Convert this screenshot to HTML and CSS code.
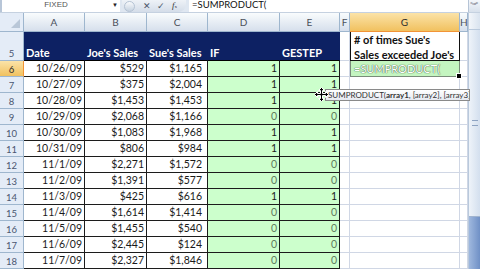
FILE: index.html
```html
<!DOCTYPE html>
<html lang="en">

<head>
    <meta charset="UTF-8">
    <meta name="viewport" content="width=device-width, initial-scale=1.0">
    <title>SUMPRODUCT - Sue vs Joe</title>
    <link rel="stylesheet" href="styles.css">
</head>

<body>
    <div class="app">
        <!-- Formula bar -->
        <div class="formula-bar">
            <div class="name-box">FIXED</div>
            <div class="name-drop">&#9660;</div>
            <div class="fx-buttons">
                <span class="knob"></span>
                <span class="fx-btn">&#10005;</span>
                <span class="fx-btn">&#10003;</span>
                <span class="fx-btn fx"><i>f</i><sub>x</sub></span>
            </div>
            <div class="formula">=SUMPRODUCT(</div>
            <div class="expand">&#65086;</div>
        </div>

        <!-- Sheet -->
        <div class="sheet-area">
            <div class="sheet">
                <div class="row col-heads">
                    <div class="corner"></div>
                    <div class="ch">A</div>
                    <div class="ch">B</div>
                    <div class="ch">C</div>
                    <div class="ch">D</div>
                    <div class="ch">E</div>
                    <div class="ch">F</div>
                    <div class="ch active">G</div>
                    <div class="ch">H</div>
                </div>

                <div class="row head-row">
                    <div class="rh">5</div>
                    <div class="c hdr">Date</div>
                    <div class="c hdr">Joe's Sales</div>
                    <div class="c hdr">Sue's Sales</div>
                    <div class="c hdr">IF</div>
                    <div class="c hdr">GESTEP</div>
                    <div class="c blank"></div>
                    <div class="c note">
                        <div class="note-text"># of times Sue's Sales exceeded Joe's</div>
                    </div>
                    <div class="c blank"></div>
                </div>

                <div class="row">
                    <div class="rh active">6</div>
                    <div class="c num">10/26/09</div>
                    <div class="c num">$529</div>
                    <div class="c num">$1,165</div>
                    <div class="c num grn">1</div>
                    <div class="c num grn">1</div>
                    <div class="c blank"></div>
                    <div class="c editing">=SUMPRODUCT(<span class="handle"></span></div>
                    <div class="c blank"></div>
                </div>

                <div class="row">
                    <div class="rh">7</div>
                    <div class="c num">10/27/09</div>
                    <div class="c num">$375</div>
                    <div class="c num">$2,004</div>
                    <div class="c num grn">1</div>
                    <div class="c num grn">1</div>
                    <div class="c blank"></div>
                    <div class="c blank"></div>
                    <div class="c blank"></div>
                </div>

                <div class="row">
                    <div class="rh">8</div>
                    <div class="c num">10/28/09</div>
                    <div class="c num">$1,453</div>
                    <div class="c num">$1,453</div>
                    <div class="c num grn">1</div>
                    <div class="c num grn">1</div>
                    <div class="c blank"></div>
                    <div class="c blank"></div>
                    <div class="c blank"></div>
                </div>

                <div class="row">
                    <div class="rh">9</div>
                    <div class="c num">10/29/09</div>
                    <div class="c num">$2,068</div>
                    <div class="c num">$1,166</div>
                    <div class="c num grn zero">0</div>
                    <div class="c num grn zero">0</div>
                    <div class="c blank"></div>
                    <div class="c blank"></div>
                    <div class="c blank"></div>
                </div>

                <div class="row">
                    <div class="rh">10</div>
                    <div class="c num">10/30/09</div>
                    <div class="c num">$1,083</div>
                    <div class="c num">$1,968</div>
                    <div class="c num grn">1</div>
                    <div class="c num grn">1</div>
                    <div class="c blank"></div>
                    <div class="c blank"></div>
                    <div class="c blank"></div>
                </div>

                <div class="row">
                    <div class="rh">11</div>
                    <div class="c num">10/31/09</div>
                    <div class="c num">$806</div>
                    <div class="c num">$984</div>
                    <div class="c num grn">1</div>
                    <div class="c num grn">1</div>
                    <div class="c blank"></div>
                    <div class="c blank"></div>
                    <div class="c blank"></div>
                </div>

                <div class="row">
                    <div class="rh">12</div>
                    <div class="c num">11/1/09</div>
                    <div class="c num">$2,271</div>
                    <div class="c num">$1,572</div>
                    <div class="c num grn zero">0</div>
                    <div class="c num grn zero">0</div>
                    <div class="c blank"></div>
                    <div class="c blank"></div>
                    <div class="c blank"></div>
                </div>

                <div class="row">
                    <div class="rh">13</div>
                    <div class="c num">11/2/09</div>
                    <div class="c num">$1,391</div>
                    <div class="c num">$577</div>
                    <div class="c num grn zero">0</div>
                    <div class="c num grn zero">0</div>
                    <div class="c blank"></div>
                    <div class="c blank"></div>
                    <div class="c blank"></div>
                </div>

                <div class="row">
                    <div class="rh">14</div>
                    <div class="c num">11/3/09</div>
                    <div class="c num">$425</div>
                    <div class="c num">$616</div>
                    <div class="c num grn">1</div>
                    <div class="c num grn">1</div>
                    <div class="c blank"></div>
                    <div class="c blank"></div>
                    <div class="c blank"></div>
                </div>

                <div class="row">
                    <div class="rh">15</div>
                    <div class="c num">11/4/09</div>
                    <div class="c num">$1,614</div>
                    <div class="c num">$1,414</div>
                    <div class="c num grn zero">0</div>
                    <div class="c num grn zero">0</div>
                    <div class="c blank"></div>
                    <div class="c blank"></div>
                    <div class="c blank"></div>
                </div>

                <div class="row">
                    <div class="rh">16</div>
                    <div class="c num">11/5/09</div>
                    <div class="c num">$1,455</div>
                    <div class="c num">$540</div>
                    <div class="c num grn zero">0</div>
                    <div class="c num grn zero">0</div>
                    <div class="c blank"></div>
                    <div class="c blank"></div>
                    <div class="c blank"></div>
                </div>

                <div class="row">
                    <div class="rh">17</div>
                    <div class="c num">11/6/09</div>
                    <div class="c num">$2,445</div>
                    <div class="c num">$124</div>
                    <div class="c num grn zero">0</div>
                    <div class="c num grn zero">0</div>
                    <div class="c blank"></div>
                    <div class="c blank"></div>
                    <div class="c blank"></div>
                </div>

                <div class="row">
                    <div class="rh">18</div>
                    <div class="c num">11/7/09</div>
                    <div class="c num">$2,327</div>
                    <div class="c num">$1,846</div>
                    <div class="c num grn zero">0</div>
                    <div class="c num grn zero">0</div>
                    <div class="c blank"></div>
                    <div class="c blank"></div>
                    <div class="c blank"></div>
                </div>
            </div>

            <!-- Vertical scrollbar -->
            <div class="vscroll">
                <div class="vs-up"></div>
                <div class="vs-thumb"><span class="grip"></span></div>
                <div class="vs-track"></div>
            </div>

            <!-- Function tooltip + move cursor -->
            <div class="tooltip">SUMPRODUCT(<b>array1</b>, [array2], [array3], ...)</div>
            <svg class="move-cursor" width="15" height="15" viewBox="0 0 15 15">
                <path d="M7.5 0.5 L10.5 3.5 L8.5 3.5 L8.5 6.5 L11.5 6.5 L11.5 4.5 L14.5 7.5 L11.5 10.5 L11.5 8.5 L8.5 8.5 L8.5 11.5 L10.5 11.5 L7.5 14.5 L4.5 11.5 L6.5 11.5 L6.5 8.5 L3.5 8.5 L3.5 10.5 L0.5 7.5 L3.5 4.5 L3.5 6.5 L6.5 6.5 L6.5 3.5 L4.5 3.5 Z"
                    fill="#000" stroke="#fff" stroke-width="1" />
            </svg>
        </div>
    </div>
</body>

</html>
```

FILE: styles.css
```css
body {
    margin: 0;
    font-family: "Lato", "Open Sans", sans-serif;
    background-color: #fff;
    color: #1a1a1a;
}

.app {
    position: relative;
    width: 480px;
    height: 270px;
    overflow: hidden;
}

/* ---------- formula bar ---------- */

.formula-bar {
    display: flex;
    height: 12px;
    border-bottom: 1px solid #c5d1e0;
    background-color: #dfe7f1;
    font-size: 9px;
    align-items: stretch;
}

.name-box {
    width: 108px;
    background-color: #fff;
    border-left: 2px solid #b8c6d8;
    color: #555;
    text-align: center;
    line-height: 10px;
    font-family: "Liberation Sans", sans-serif;
    font-size: 8px;
}

.name-drop {
    width: 10px;
    background-color: #fff;
    font-size: 6px;
    line-height: 10px;
    color: #222;
    text-align: center;
}

.fx-buttons {
    display: flex;
    align-items: center;
    gap: 3px;
    width: 62px;
    margin: 0 3px 0 2px;
    padding-left: 2px;
    border-radius: 0 0 8px 8px;
    background: linear-gradient(#eef2f7, #d4dde9);
    color: #556;
}

.knob {
    width: 9px;
    height: 9px;
    border-radius: 50%;
    background: linear-gradient(#f8fafc, #c6d2e0);
    border: 1px solid #b5c3d4;
    margin-right: 3px;
}

.fx-btn {
    width: 11px;
    text-align: center;
    font-size: 9px;
    line-height: 10px;
    color: #4a5568;
}

.fx {
    font-family: "Liberation Serif", serif;
    font-size: 9px;
    line-height: 9px;
    color: #333;
}

.fx sub {
    font-size: 5px;
    vertical-align: baseline;
}

.formula {
    flex: 1;
    background-color: #fff;
    padding-left: 3px;
    font-size: 9.5px;
    line-height: 10px;
    color: #111;
}

.expand {
    width: 11px;
    background: linear-gradient(#f4f7fb, #d8e1ec);
    border-left: 1px solid #b6c4d6;
    font-size: 9px;
    line-height: 10px;
    text-align: center;
    color: #445;
}

/* ---------- sheet ---------- */

.sheet-area {
    display: flex;
}

.sheet {
    width: 468px;
}

.row {
    display: grid;
    grid-template-columns: 24px 61px 62px 61px 72px 60px 10px 110px 8px;
    height: 16px;
}

.col-heads {
    height: 19px;
}

.head-row {
    height: 29px;
}

.corner {
    position: relative;
    background-color: #e4ecf7;
    border-right: 1px solid #9eb6ce;
    border-bottom: 1px solid #9eb6ce;
}

.corner::after {
    content: "";
    position: absolute;
    right: 3px;
    bottom: 3px;
    border-left: 9px solid transparent;
    border-bottom: 9px solid #b9c7d8;
}

.ch {
    background: linear-gradient(#f9fcfd, #d6dfec);
    border-right: 1px solid #9eb6ce;
    border-bottom: 1px solid #9eb6ce;
    color: #4a4f5a;
    font-size: 10px;
    line-height: 18px;
    text-align: center;
    overflow: hidden;
}

.ch.active {
    background: linear-gradient(#fbe3a8, #f1c15f);
    border-bottom-color: #f29436;
    color: #2c2c2c;
}

.rh {
    background-color: #e4ecf7;
    border-right: 1px solid #9eb6ce;
    border-bottom: 1px solid #9eb6ce;
    color: #4a5670;
    font-size: 9.5px;
    text-align: center;
    display: flex;
    align-items: flex-end;
    justify-content: center;
    padding-bottom: 1px;
}

.rh.active {
    background: linear-gradient(#fbe3a8, #f1c15f);
    border-right-color: #f29436;
    color: #2c2c2c;
}

.c {
    border-right: 1px solid #1c1c1c;
    border-bottom: 1px solid #1c1c1c;
    font-size: 10.5px;
    line-height: 15px;
    white-space: nowrap;
    overflow: hidden;
    padding: 0 2px;
}

.num {
    text-align: right;
}

.num:nth-child(4) {
    padding-right: 5px;
}

.hdr {
    background-color: #0d2163;
    border-right-color: #0d2163;
    border-bottom-color: #000;
    color: #fff;
    font-weight: bold;
    font-size: 11px;
    display: flex;
    align-items: flex-end;
    padding-bottom: 0;
}

.grn {
    background-color: #ccffcc;
}

.zero {
    color: #5f7a5f;
}

.blank {
    border-right-color: #d0d7e5;
    border-bottom-color: #d0d7e5;
}

.note {
    border: 1px solid #111;
    border-top: none;
    padding: 0 3px;
}

.note-text {
    font-weight: bold;
    font-size: 11px;
    line-height: 15px;
    white-space: normal;
    color: #111;
}

.editing {
    position: relative;
    background-color: #c4f5c0;
    border: 1px solid #7a8c7a;
    border-top: none;
    color: #fff;
    text-shadow: 0 0 1px #3d5a3d, 0 0 1px #3d5a3d;
    font-size: 11px;
    padding-left: 3px;
    overflow: visible;
}

.handle {
    position: absolute;
    right: -3px;
    bottom: -3px;
    width: 4px;
    height: 4px;
    background-color: #000;
    border: 1px solid #fff;
}

/* ---------- scrollbar ---------- */

.vscroll {
    width: 12px;
    display: flex;
    flex-direction: column;
    background-color: #e3ebf5;
    border-left: 1px solid #b9c9dc;
}

.vs-up {
    height: 16px;
    background: linear-gradient(90deg, #f3f6fa, #d9e3ef);
    border-bottom: 1px solid #b9c9dc;
}

.vs-thumb {
    height: 186px;
    display: flex;
    align-items: center;
    justify-content: center;
    background: linear-gradient(90deg, #eef3f9, #d3dfee);
    border-bottom: 1px solid #9fb3cf;
}

.grip {
    width: 6px;
    height: 4px;
    border-top: 1px solid #8da3c2;
    border-bottom: 1px solid #8da3c2;
}

.vs-track {
    flex: 1;
    background: linear-gradient(90deg, #9fb8de, #6f90c6);
}

/* ---------- overlays ---------- */

.tooltip {
    position: absolute;
    left: 325px;
    top: 89px;
    width: 141px;
    height: 10px;
    padding-left: 2px;
    background: linear-gradient(#ffffff, #e6e9f0);
    border: 1px solid #8a8a8a;
    font-size: 8px;
    line-height: 10px;
    color: #333;
    white-space: nowrap;
    overflow: hidden;
}

.move-cursor {
    position: absolute;
    left: 314px;
    top: 87px;
}
```
